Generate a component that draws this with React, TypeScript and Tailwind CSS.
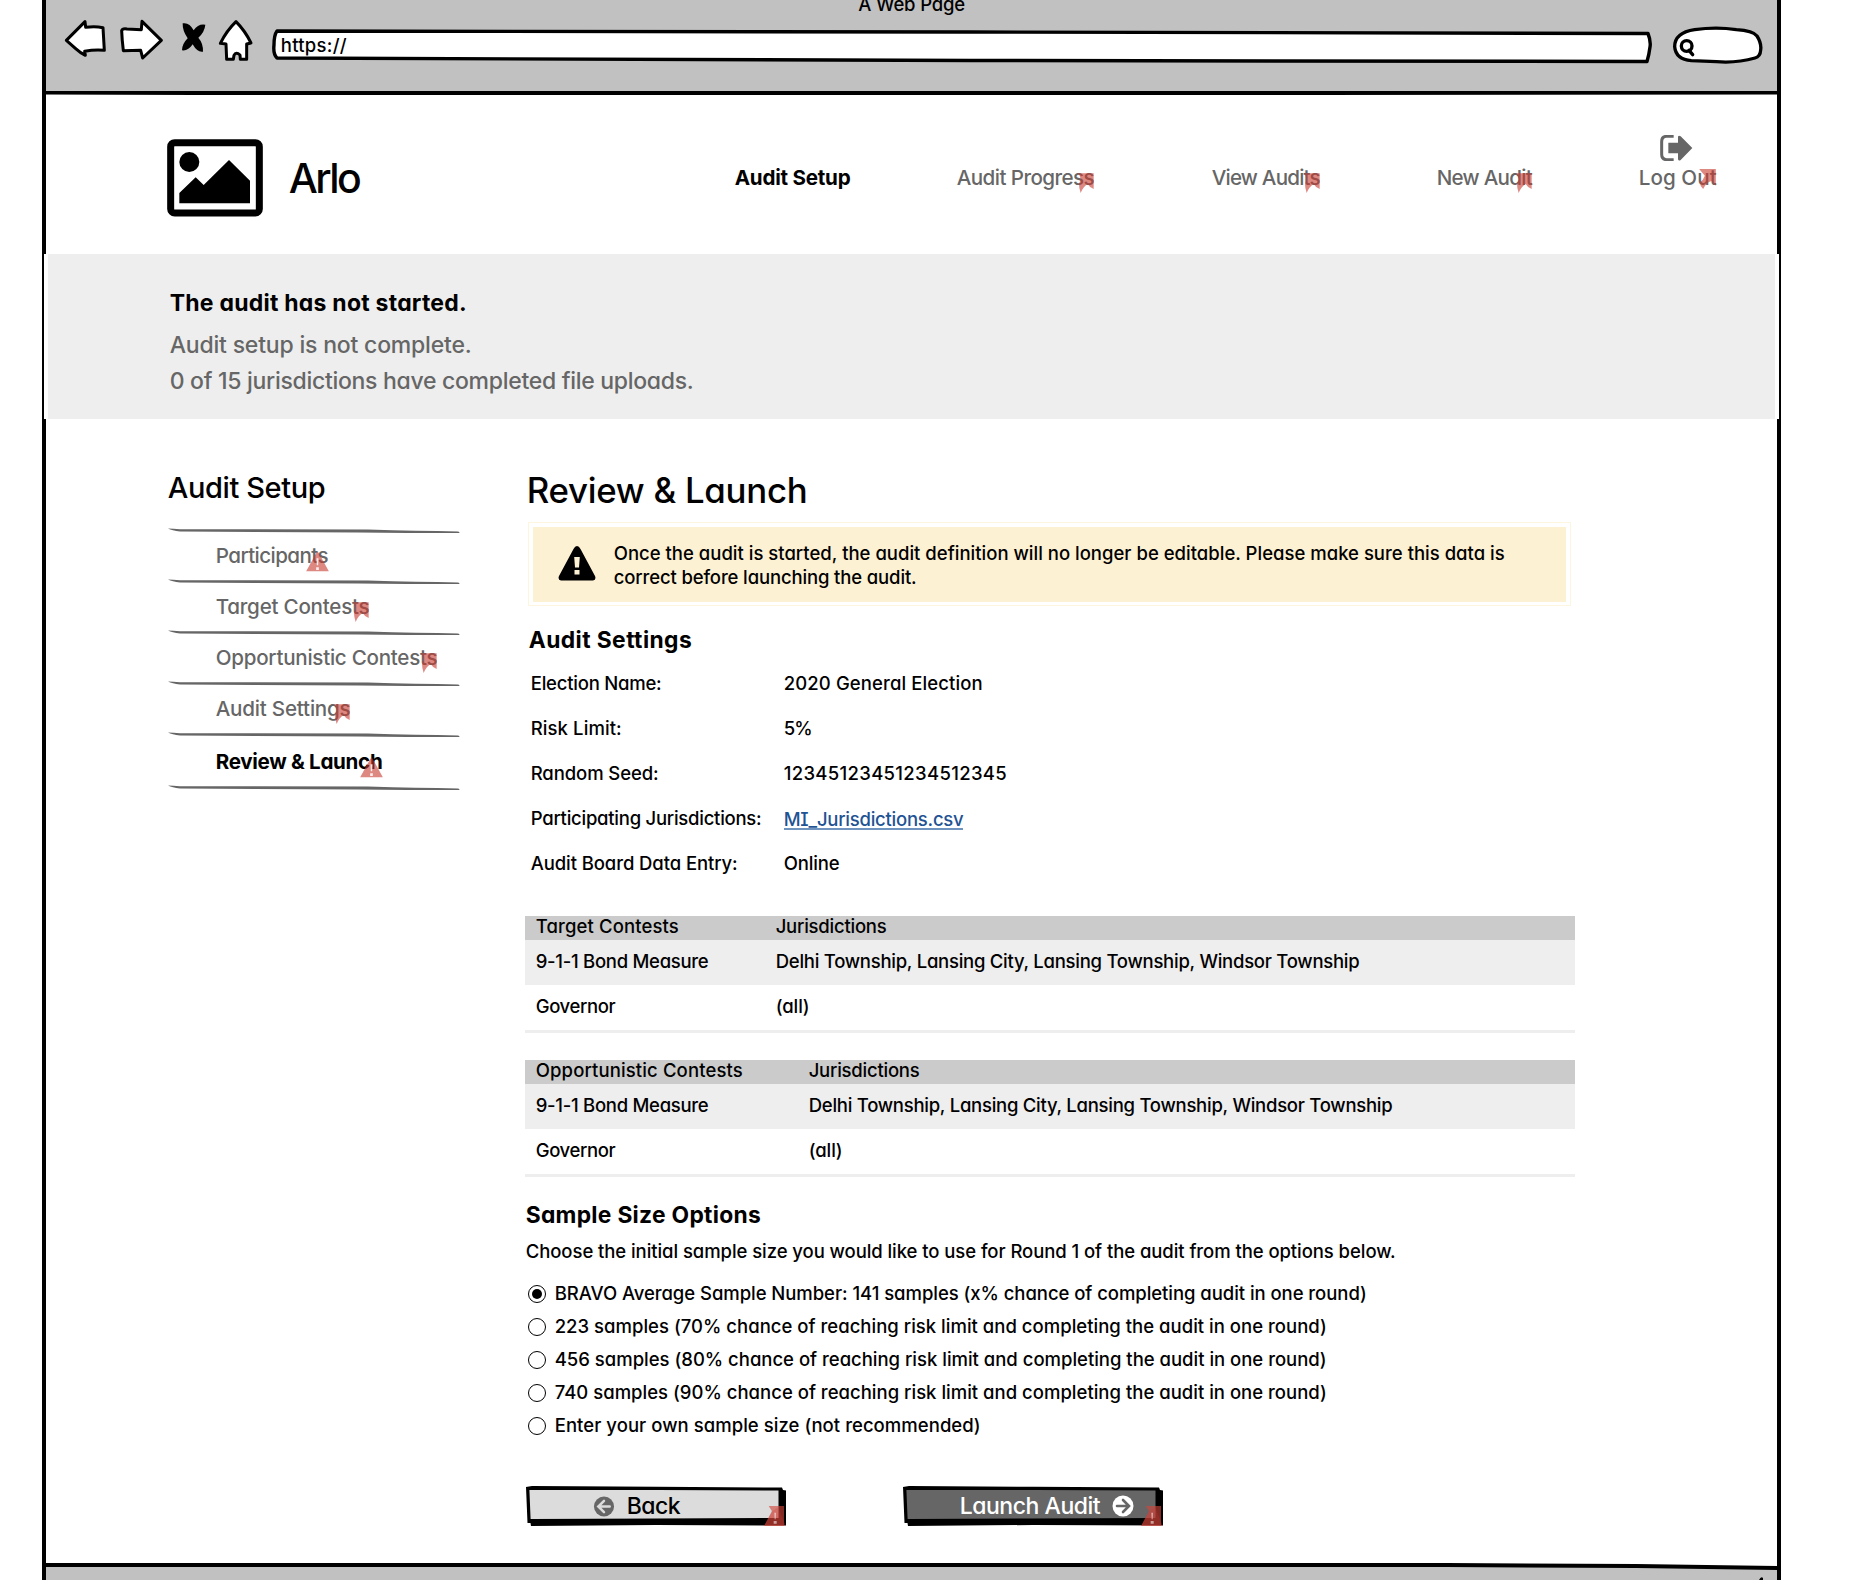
import { useLayoutEffect, useRef, useState, type ReactNode } from 'react';

/* Spreads a single line of text over the width its class gives it. */
function Line({ text, className = '' }: { text: string; className?: string }) {
  const box = useRef<HTMLSpanElement>(null);
  const ink = useRef<HTMLSpanElement>(null);
  const [tracking, setTracking] = useState(0);
  useLayoutEffect(() => {
    if (!box.current || !ink.current) return;
    const wanted = box.current.getBoundingClientRect().width + 1;
    const natural = ink.current.getBoundingClientRect().width - tracking * text.length;
    setTracking((wanted - natural) / (text.length - 1));
  }, [text]);
  return (
    <span ref={box} className={`block shrink-0 whitespace-nowrap ${className}`}>
      <span ref={ink} className="-ml-[0.3px] inline-block" style={{ letterSpacing: `${tracking}px` }}>
        {text}
      </span>
    </span>
  );
}

function Flag() {
  return (
    <svg className="absolute right-0 top-1/2 -mt-[5px] h-5 w-4" viewBox="0 0 48 60">
      <path d="M0 1H47V48Q36 45 29 33Q16 40 8 60Q3 46 3 32L8 20Q8 9 0 1Z" fill="#c8382e" fillOpacity="0.6" />
    </svg>
  );
}

function ArrowFlag() {
  return (
    <svg className="absolute right-0 top-1/2 -mt-[9px] h-5 w-[17px]" viewBox="0 0 50 60">
      <path d="M0 0H50V50L36 36Q20 42 12 60Q2 50 2 40Q12 34 17 20Z" fill="#c8382e" fillOpacity="0.6" />
    </svg>
  );
}

function Warn() {
  return (
    <svg className="absolute -right-px top-1/2 -mt-[4px] h-5 w-[23px]" viewBox="0 0 68 60">
      <path d="M34 0Q37 0 39 5L68 58H0L29 5Q31 0 34 0Z" fill="#c8382e" fillOpacity="0.6" />
      <path d="M31 19H37L36 40H32ZM30 46H38V54H30Z" fill="#fff" fillOpacity="0.85" />
    </svg>
  );
}

function CornerBadge() {
  return (
    <svg className="absolute bottom-0 right-0 h-5 w-[22px]" viewBox="0 0 66 60">
      <path d="M14 0H60V60H0L24 16Z" fill="#d2453c" fillOpacity="0.62" />
      <path d="M42 4L66 60H0L24 16Z" fill="#c8382e" fillOpacity="0.25" />
      <path d="M31 20H36L35 40H32ZM29 45H38V53H29Z" fill="#fff" fillOpacity="0.55" />
    </svg>
  );
}

function NavItem({ text, className, badge }: { text: string; className: string; badge?: ReactNode }) {
  return (
    <a className="relative block leading-[24px]">
      <Line text={text} className={className} />
      {badge}
    </a>
  );
}

function Toolbar() {
  return (
    <div className="h-[91px] bg-[#c1c1c1]">
      <div className="flex h-[8px] justify-center leading-[8px]">
        <Line text="A Web Page" className="w-[106px]" />
      </div>
      <div className="flex items-start pl-[17px] pt-[10px]">
        <svg className="h-[42px] w-[44px]" viewBox="99 54 132 126" fill="#fff" stroke="#000" strokeWidth="9" strokeLinejoin="round">
          <path d="M109 121L165 65L167 82Q195 78 219 83L223 151Q195 148 164 154L166 166Q150 158 137 146Z" />
        </svg>
        <svg className="ml-[11px] h-[42px] w-[46px]" viewBox="264 54 138 126" fill="#fff" stroke="#000" strokeWidth="9" strokeLinejoin="round">
          <path d="M275 92Q277 85 291 87L334 89L336 64L394 121L338 174L332 151L280 152Q276 120 275 92Z" />
        </svg>
        <svg className="ml-[17px] h-[42px] w-[26px]" viewBox="453 54 78 126">
          <path d="M458 70Q478 66 491 91Q505 70 526 74Q524 96 505 113Q520 130 519 155Q502 158 488 133Q474 154 456 151Q456 132 473 115Q457 92 458 70Z" />
        </svg>
        <svg className="ml-[11px] h-[44px] w-[36px]" viewBox="564 50 108 132" fill="#fff" stroke="#000" strokeWidth="9" strokeLinejoin="round">
          <path d="M618 61Q645 88 663 125L650 128L650 174L631 174L630 161Q618 150 612 162L610 174L590 174L588 128L571 126Q590 88 618 61Z" />
        </svg>
        <div className="relative ml-[17px] mt-[9px] h-[38px] w-[1382px]">
          <svg className="absolute inset-0 h-full w-full" viewBox="0 0 1382 38" fill="#fff" stroke="#000" strokeWidth="3.4" strokeLinejoin="round">
            <path d="M6 4L700 5L1377 6.5Q1380 14 1379 20Q1378 28 1376 34.5L700 33.5L6 31Q2 27 3 18Q3 8 6 4Z" />
          </svg>
          <div className="relative pl-[10px] leading-[37px]">
            <Line text="https://" className="w-[65px]" />
          </div>
        </div>
        <svg className="ml-[19px] mt-[7px] h-[40px] w-[92px]" viewBox="967 75 276 120" fill="#fff" stroke="#000" strokeWidth="10" strokeLinecap="round">
          <path d="M975 140Q975 98 1035 89Q1100 80 1160 89Q1210 92 1222 108Q1236 130 1233 150Q1232 170 1216 174Q1160 190 1100 185L1025 182Q978 178 975 140Z" />
          <circle cx="1011" cy="138" r="16" />
          <path d="M1018 151L1029 164" />
        </svg>
      </div>
    </div>
  );
}

function Header() {
  return (
    <header className="flex h-[159px] pl-[121px]">
      <svg className="mt-[44px] h-[78px] w-[96px] shrink-0" viewBox="0 0 288 234">
        <rect x="11" y="11" width="266" height="211" rx="12" fill="#fff" stroke="#000" strokeWidth="21" />
        <circle cx="67" cy="69" r="30" />
        <path d="M37 193V162L86 115L110 138L186 63L249 125V193Z" />
      </svg>
      <div className="ml-[26px] mt-[58px] text-[41px] leading-[50px]">
        <Line text="Arlo" className="w-[72px]" />
      </div>
      <nav className="mt-[71px] flex text-[20.6px] text-[#666]">
        <div className="ml-[374px] font-bold text-black">
          <NavItem text="Audit Setup" className="w-[115px]" />
        </div>
        <div className="ml-[107px]">
          <NavItem text="Audit Progress" className="w-[137px]" badge={<Flag />} />
        </div>
        <div className="ml-[118px]">
          <NavItem text="View Audits" className="w-[108px]" badge={<Flag />} />
        </div>
        <div className="ml-[117px]">
          <NavItem text="New Audit" className="w-[95px]" badge={<Flag />} />
        </div>
        <div className="-mt-[31px] ml-[107px]">
          <svg className="ml-[21px] h-[26px] w-[33px]" viewBox="0 0 99 78" fill="#666">
            <path d="M41 4H20Q5 4 5 20V58Q5 74 20 74H41" fill="none" stroke="#666" strokeWidth="9" />
            <path d="M25 23H54V5Q56 0 62 4L97 39L62 75Q56 79 54 73V55H25Z" />
          </svg>
          <div className="mt-[5px]">
            <NavItem text="Log Out" className="w-[77px]" badge={<ArrowFlag />} />
          </div>
        </div>
      </nav>
    </header>
  );
}

function Banner() {
  return (
    <section className="relative -mx-[2px] h-[165px] border-x-4 border-white bg-[#eee] pl-[122px] pt-[32px] text-[23px] leading-[35px] text-[#666]">
      <Line text="The audit has not started." className="w-[296px] font-bold text-black" />
      <Line text="Audit setup is not complete." className="mt-[7px] w-[301px]" />
      <Line text="0 of 15 jurisdictions have completed file uploads." className="mt-px w-[523px]" />
    </section>
  );
}

function Rule() {
  return (
    <svg className="block h-[6px] w-[292px]" viewBox="0 0 292 6">
      <path d="M0 .6Q5 .8 12 1.2L200 1.6Q250 3 290 3.4Q294 5 288 5Q240 5 190 4.4L12 3.6Q4 2.6 0 .6Z" fill="#666" />
    </svg>
  );
}

const steps = [
  { text: 'Participants', box: 'w-[112px]', warn: true },
  { text: 'Target Contests', box: 'w-[153px]' },
  { text: 'Opportunistic Contests', box: 'w-[221px]' },
  { text: 'Audit Settings', box: 'w-[134px]' },
];

function Sidebar() {
  return (
    <aside className="ml-[122px] w-[292px] shrink-0 pt-[49px]">
      <h2 className="text-[29px] leading-[40px]">
        <Line text="Audit Setup" className="w-[157px]" />
      </h2>
      <div className="mt-[20px] text-[20.6px] text-[#666]">
        <Rule />
        {steps.map((s) => (
          <div key={s.text}>
            <div className="flex h-[45px] items-center pb-[2px] pl-[48px]">
              <NavItem text={s.text} className={s.box} badge={s.warn ? <Warn /> : <Flag />} />
            </div>
            <Rule />
          </div>
        ))}
        <div className="flex h-[47px] items-center pl-[48px] font-bold text-black">
          <NavItem text="Review & Launch" className="w-[166px]" badge={<Warn />} />
        </div>
        <Rule />
      </div>
    </aside>
  );
}

const settings = [
  { label: 'Election Name:', lw: 'w-[130px]', value: '2020 General Election', vw: 'w-[198px]' },
  { label: 'Risk Limit:', lw: 'w-[90px]', value: '5%', vw: 'w-[28px]' },
  { label: 'Random Seed:', lw: 'w-[127px]', value: '12345123451234512345', vw: 'w-[222px]' },
  { label: 'Participating Jurisdictions:', lw: 'w-[230px]', value: 'MI_Jurisdictions.csv', vw: 'w-[179px]', link: true },
  { label: 'Audit Board Data Entry:', lw: 'w-[206px]', value: 'Online', vw: 'w-[55px]' },
];

function ContestTable({ title, titleWidth, col }: { title: string; titleWidth: string; col: string }) {
  return (
    <div className="border-b-[3px] border-[#eee]">
      <div className="flex h-[24px] bg-[#cbcbcb] pl-[11px] leading-[20px]">
        <div className={col}><Line text={title} className={titleWidth} /></div>
        <Line text="Jurisdictions" className="w-[110px]" />
      </div>
      <div className="flex h-[45px] bg-[#eee] pl-[11px] leading-[43px]">
        <div className={col}><Line text="9-1-1 Bond Measure" className="w-[172px]" /></div>
        <Line text="Delhi Township, Lansing City, Lansing Township, Windsor Township" className="w-[583px]" />
      </div>
      <div className="flex h-[45px] pl-[11px] leading-[43px]">
        <div className={col}><Line text="Governor" className="w-[79px]" /></div>
        <Line text="(all)" className="w-[33px]" />
      </div>
    </div>
  );
}

const options = [
  { text: 'BRAVO Average Sample Number: 141 samples (x% chance of completing audit in one round)', box: 'w-[811px]', on: true },
  { text: '223 samples (70% chance of reaching risk limit and completing the audit in one round)', box: 'w-[771px]' },
  { text: '456 samples (80% chance of reaching risk limit and completing the audit in one round)', box: 'w-[771px]' },
  { text: '740 samples (90% chance of reaching risk limit and completing the audit in one round)', box: 'w-[771px]' },
  { text: 'Enter your own sample size (not recommended)', box: 'w-[425px]' },
];

function SketchButton({ fill, children }: { fill: string; children: ReactNode }) {
  return (
    <button className="relative block h-[40px] w-[260px] text-[23px] leading-[36px]">
      <svg className="absolute inset-0 h-full w-full" viewBox="0 0 260 40">
        <path d="M0 1L6 0L130 .8L256 1.5L257 4L260 4.5V39.5L130 39L5 40L4.5 37H1.5Z" fill="#000" />
        <path d="M3.4 4L130 4L252.500 4.600V32L130 32.400L4.600 33Z" fill={fill} />
      </svg>
      <div className="relative flex items-center">{children}</div>
      <CornerBadge />
    </button>
  );
}

function Main() {
  return (
    <main className="ml-[65px] w-[1050px] pt-[51px]">
      <h1 className="pl-[2px] text-[34.8px] leading-[40px]">
        <Line text="Review & Launch" className="w-[280px]" />
      </h1>
      <div className="ml-[3px] mt-[12px] h-[84px] w-[1043px] border border-[#fef5df] p-[4px]">
        <div className="flex h-[75px] bg-[#fdf1d3] pl-[25px]">
          <svg className="mt-[19px] h-[35px] w-[38px]" viewBox="0 0 38 35">
            <path d="M19 0Q21 0 22.500 3L37 30Q38.500 34 35 34.500H3Q-.5 34 1 30L15.500 3Q17 0 19 0Z" />
            <path d="M16.200 11H21.800L21 21.500H17ZM16.500 24H21.500V28.500H16.500Z" fill="#fdf1d3" />
          </svg>
          <div className="ml-[18px] pt-[15px] leading-[23.5px]">
            <Line text="Once the audit is started, the audit definition will no longer be editable. Please make sure this data is" className="w-[890px]" />
            <Line text="correct before launching the audit." className="w-[302px]" />
          </div>
        </div>
      </div>
      <h3 className="mt-[19px] pl-[4px] text-[22.8px] font-bold leading-[30px]">
        <Line text="Audit Settings" className="w-[162px]" />
      </h3>
      <div className="mt-[6px]">
        {settings.map((s) => (
          <div key={s.label} className="flex h-[45px] pl-[6px] leading-[45px]">
            <div className="w-[253px]"><Line text={s.label} className={s.lw} /></div>
            {s.link ? (
              <a className="mt-[11px] h-[23px] border-b-2 border-[#6f93bf] leading-[24px] text-[#1f5394] [font-feature-settings:'cv11','cv08']">
                <Line text={s.value} className={s.vw} />
              </a>
            ) : (
              <Line text={s.value} className={s.vw} />
            )}
          </div>
        ))}
      </div>
      <div className="mt-[30px] flex flex-col gap-[27px]">
        <ContestTable title="Target Contests" titleWidth="w-[142px]" col="w-[240px]" />
        <ContestTable title="Opportunistic Contests" titleWidth="w-[206px]" col="w-[273px]" />
      </div>
      <h3 className="mt-[23px] pl-px text-[22.8px] font-bold leading-[30px]">
        <Line text="Sample Size Options" className="w-[234px]" />
      </h3>
      <div className="mt-[6px] pl-px leading-[30px]">
        <Line text="Choose the initial sample size you would like to use for Round 1 of the audit from the options below." className="w-[869px]" />
      </div>
      <div className="mt-[11px]">
        {options.map((o) => (
          <label key={o.text} className="flex h-[33px] items-center pl-[3px] leading-[33px]">
            <span className="flex h-[18px] w-[18px] items-center justify-center rounded-full border border-black bg-white">
              {o.on && <span className="h-[10px] w-[10px] rounded-full bg-black" />}
            </span>
            <Line text={o.text} className={`ml-[9px] ${o.box}`} />
          </label>
        ))}
      </div>
      <div className="mt-[44px] flex gap-[117px] pl-px">
        <SketchButton fill="#dcdcdc">
          <svg className="ml-[67px] h-[21px] w-[22px]" viewBox="0 0 22 22">
            <circle cx="11" cy="11" r="10.500" fill="#666" />
            <path d="M11 5L5 11L11 17M5.500 11H17" fill="none" stroke="#dcdcdc" strokeWidth="2.600" strokeLinecap="round" />
          </svg>
          <Line text="Back" className="ml-[12px] w-[53px]" />
        </SketchButton>
        <SketchButton fill="#666">
          <Line text="Launch Audit" className="ml-[57px] w-[140px] text-white" />
          <svg className="ml-[12px] h-[22px] w-[22px]" viewBox="0 0 22 22">
            <circle cx="11" cy="11" r="10.500" fill="#fff" />
            <path d="M11 5L17 11L11 17M16.500 11H5" fill="none" stroke="#666" strokeWidth="2.600" strokeLinecap="round" />
          </svg>
        </SketchButton>
      </div>
    </main>
  );
}

export default function App() {
  return (
    <div className="h-[1580px] w-[1850px] overflow-hidden bg-white font-['Inter','Noto_Sans',sans-serif] text-[18.5px] font-medium text-black [font-feature-settings:'cv11']">
      <div className="ml-[42px] h-full w-[1739px] border-x-4 border-black">
        <Toolbar />
        <svg className="block h-[4px] w-full" viewBox="0 0 1731 4" preserveAspectRatio="none">
          <path d="M0 0H1731V3.600L700 4.500L300 4.500L0 3.500Z" />
        </svg>
        <Header />
        <Banner />
        <div className="flex h-[1142px]">
          <Sidebar />
          <Main />
        </div>
        <div className="h-[19px] bg-[#c1c1c1]">
          <svg className="block h-[19px] w-full" viewBox="0 0 1731 19">
            <path d="M0 0H1731V7L1590 4L1400 3.500L0 3.500Z" fill="#fff" />
            <path d="M0 2L1400 2L1590 3L1731 5V9L1590 7L1400 6L0 6Z" />
            <path d="M1713 19Q1715 15 1717 17V19Z" />
          </svg>
        </div>
      </div>
    </div>
  );
}
